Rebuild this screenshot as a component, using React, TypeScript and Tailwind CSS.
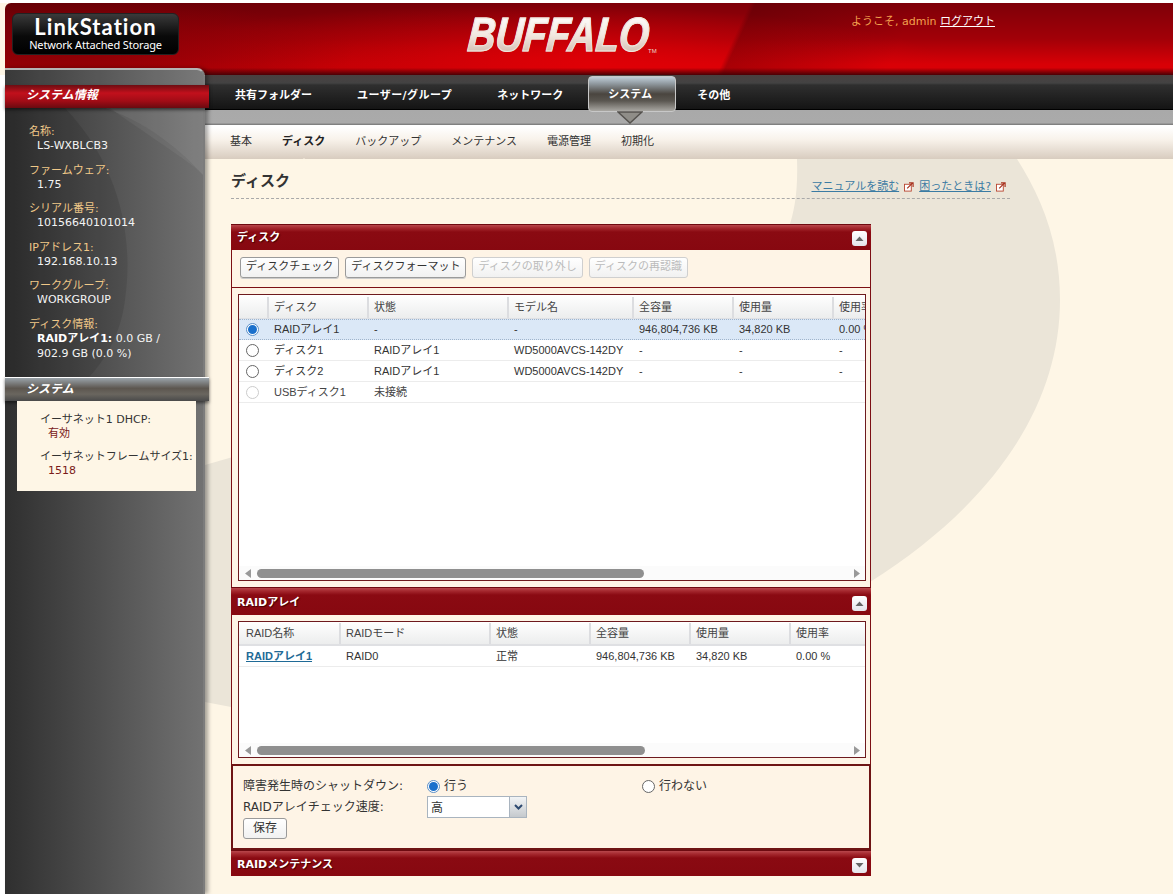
import React from "react";

const sansCls = "[font-family:'Liberation_Sans','Noto_Sans_CJK_JP',sans-serif]";
const verdCls = "[font-family:'DejaVu_Sans','Noto_Sans_CJK_JP',sans-serif]";

function ExtIcon() {
  return (
    <svg width="10" height="10" viewBox="0 0 11 11" fill="none" className="shrink-0">
      <rect x="0.5" y="2.5" width="7.5" height="7.5" fill="#fff" stroke="#b8452f" />
      <path d="M3.5 7 L9 1.5 M5.5 1 H10 V5.5" stroke="#a8321f" strokeWidth="1.3" />
    </svg>
  );
}

function Toggle({ up }: { up: boolean }) {
  return (
    <span className="w-[15px] h-[15px] rounded-[3px] bg-[linear-gradient(#ffffff,#e4e4ea)] flex items-center justify-center">
      <svg width="9" height="6" viewBox="0 0 9 6">
        <path d={up ? "M4.5 0.5 L8.5 5 H0.5 Z" : "M0.5 1 H8.5 L4.5 5.5 Z"} fill="#666" />
      </svg>
    </span>
  );
}

function PanelHeader({ title, up = true, h }: { title: string; up?: boolean; h: string }) {
  return (
    <div
      className={`${h} flex items-center justify-between pl-[6px] pr-[4px] border-t border-[#6e0a10] bg-[linear-gradient(#b8474c_0px,#a5282e_3px,#8a0a12_7px,#870810_100%)]`}
    >
      <span className={`${verdCls} text-white font-bold text-[11px] [text-shadow:1px_1px_1px_#400]`}>{title}</span>
      <Toggle up={up} />
    </div>
  );
}

function Btn({ children, disabled = false }: { children: React.ReactNode; disabled?: boolean }) {
  return (
    <span
      className={`h-[21px] px-[5px] flex items-center rounded-[3px] border text-[11px] bg-[linear-gradient(#ffffff,#f1f1f1)] ${
        disabled ? "border-[#cfcfcf] text-[#bbbbbb]" : "border-[#9a9a9a] text-[#333333] shadow-[0_1px_0_#ccc]"
      }`}
    >
      {children}
    </span>
  );
}

function Radio({ state }: { state: "on" | "off" | "disabled" }) {
  if (state === "on") {
    return (
      <span className="w-[13px] h-[13px] rounded-full border border-[#5b8fc7] bg-white flex items-center justify-center shrink-0">
        <span className="w-[9px] h-[9px] rounded-full bg-[#1a70cc]" />
      </span>
    );
  }
  return (
    <span
      className={`w-[13px] h-[13px] rounded-full border bg-white shrink-0 ${
        state === "off" ? "border-[#666666]" : "border-[#cccccc] bg-[#f4f4f4]"
      }`}
    />
  );
}

function Scroll({ thumb }: { thumb: string }) {
  return (
    <div className="h-[14px] flex items-center bg-[#fbfbfb] relative">
      <svg width="6" height="9" viewBox="0 0 6 9" className="ml-[6px]">
        <path d="M6 0 V9 L0 4.5 Z" fill="#999" />
      </svg>
      <div className={`${thumb} ml-[6px] h-[9px] rounded-full bg-[#8f8f8f]`} />
      <svg width="6" height="9" viewBox="0 0 6 9" className="ml-auto mr-[5px]">
        <path d="M0 0 V9 L6 4.5 Z" fill="#999" />
      </svg>
    </div>
  );
}

function HeadCell({ w, first = false, children }: { w: string; first?: boolean; children?: React.ReactNode }) {
  return (
    <div
      className={`${w} shrink-0 h-full flex items-center text-[#444444] whitespace-nowrap ${
        first ? "pl-[7px]" : "pl-[5px] border-l-2 border-[#dcdde0]"
      }`}
    >
      {children}
    </div>
  );
}

function Cell({ w, children, link = false }: { w: string; children?: React.ReactNode; link?: boolean }) {
  return (
    <div
      className={`${w} shrink-0 pl-[7px] whitespace-nowrap ${
        link ? "font-bold underline text-[#1f6a96]" : ""
      }`}
    >
      {children}
    </div>
  );
}

const sideItems: [string, React.ReactNode][] = [
  ["名称:", "LS-WXBLCB3"],
  ["ファームウェア:", "1.75"],
  ["シリアル番号:", "10156640101014"],
  ["IPアドレス1:", "192.168.10.13"],
  ["ワークグループ:", "WORKGROUP"],
];

function Sidebar() {
  return (
    <aside className="relative z-20 w-[200px] shrink-0 -mt-[7px] h-[826px] rounded-tr-[8px] border-t-2 border-r-2 border-[#b4b4b4] border-r-[#7c7c7c] bg-[linear-gradient(to_right,#2f2f2f,#727272)] shadow-[3px_0_4px_rgba(0,0,0,0.35)]">
      <svg className="absolute inset-0 pointer-events-none" width="198" height="500" viewBox="0 0 198 500">
        <path d="M0 38 H100 C150 55 185 90 198 105 V0 H0 Z" fill="#fff" opacity="0.05" />
        <path d="M105 38 C150 70 190 95 198 105 V40 Z" fill="#fff" opacity="0.05" />
        <path d="M0 320 V38 H60 C110 90 130 160 120 230 C115 270 95 300 70 320 Z" fill="#000" opacity="0.1" />
      </svg>
      <div className="relative w-[204px] h-[23px] mt-[15px] flex items-center pl-[21px] pb-[3px] bg-[linear-gradient(#6e0d12,#c2101c_35%,#a10c16_70%,#6a0a10)] shadow-[0_2px_3px_rgba(0,0,0,0.5)]">
        <span className={`${verdCls} italic font-bold text-[12px] text-white`}>システム情報</span>
      </div>
      <div className={`${verdCls} relative pt-[17px] pl-[24px] text-[11px] leading-[14px]`}>
        {sideItems.map(([label, value]) => (
          <div key={label} className="mb-[10.5px]">
            <div className="text-[#f0c888]">{label}</div>
            <div className="pl-[8px] text-[#f4f4f4]">{value}</div>
          </div>
        ))}
        <div className="text-[#f0c888]">ディスク情報:</div>
        <div className="pl-[8px] -mt-[1px] text-[#f4f4f4] leading-[15px]">
          <b className="text-white">RAIDアレイ1:</b> 0.0 GB /
          <br />
          902.9 GB (0.0 %)
        </div>
      </div>
      <div className="relative mt-[16px] w-[204px] h-[24px] flex items-center pl-[21px] border-t border-white bg-[linear-gradient(#9aa3aa,#5c564f_45%,#6a665f_70%,#4a4a4a)] shadow-[0_2px_3px_rgba(0,0,0,0.5)]">
        <span className={`${verdCls} italic font-bold text-[12px] text-white`}>システム</span>
      </div>
      <div className={`${verdCls} relative ml-[12px] w-[179px] h-[90px] bg-[#fef6e6] pt-[12px] pl-[23px] text-[11px] leading-[14px] text-[#333333] whitespace-nowrap`}>
        <div>イーサネット1 DHCP:</div>
        <div className="pl-[8px] text-[#7a1a1a]">有効</div>
        <div className="mt-[9.5px]">イーサネットフレームサイズ1:</div>
        <div className="pl-[8px] text-[#7a1a1a]">1518</div>
      </div>
    </aside>
  );
}

function Nav() {
  return (
    <>
      <div className={`${verdCls} h-[35px] flex items-center pl-[30px] gap-[45px] pt-[8px] border-b border-black bg-[linear-gradient(#4a4040_0px,#434343_8px,#2f2f2f_10px,#141414_100%)] text-white font-bold text-[11px]`}>
        <span>共有フォルダー</span>
        <span className="tracking-[0.45px]">ユーザー/グループ</span>
        <span>ネットワーク</span>
        <span className="relative -mx-[20px] w-[88px] h-[36px] self-start -mt-[7px] pt-[3px] pr-[4px] flex items-center justify-center rounded-[4px] border border-[#c8c8c8] bg-[linear-gradient(#c0ced9,#8f989e_20%,#4a453f_50%,#5a5650_70%,#a9a7a2)] z-10">
          システム
          <svg className="absolute top-[34px] left-[28px]" width="26" height="14" viewBox="0 0 26 14">
            <path d="M1 1 L13 12 L25 1 Z" fill="#8f8d88" stroke="#55524e" strokeWidth="1.5" />
          </svg>
        </span>
        <span className="-ml-[4px]">その他</span>
      </div>
      <div className="h-[15px] bg-[linear-gradient(#a9a9a9,#aaaaaa_85%,#747474)]" />
      <div className="h-[2px] bg-white" />
      <div className={`${verdCls} h-[32px] flex items-center pl-[25px] pb-[2px] gap-[30px] text-[11px] text-[#333333] bg-[linear-gradient(#ffffff,#f8f2ea_40%,#d8ccbf)]`}>
        <span>基本</span>
        <span className="relative font-bold text-[#222222]">
          ディスク
          <svg className="absolute top-[24px] left-[14px]" width="16" height="9" viewBox="0 0 16 9">
            <path d="M8 0 L16 9 H0 Z" fill="#fef6e6" />
          </svg>
        </span>
        <span>バックアップ</span>
        <span>メンテナンス</span>
        <span>電源管理</span>
        <span>初期化</span>
      </div>
    </>
  );
}

function DiskTable() {
  const widths = ["w-[28px]", "w-[100px]", "w-[140px]", "w-[125px]", "w-[100px]", "w-[100px]", "w-[100px]"];
  const rows: [("on" | "off" | "disabled"), string[]][] = [
    ["on", ["RAIDアレイ1", "-", "-", "946,804,736 KB", "34,820 KB", "0.00 %"]],
    ["off", ["ディスク1", "RAIDアレイ1", "WD5000AVCS-142DY", "-", "-", "-"]],
    ["off", ["ディスク2", "RAIDアレイ1", "WD5000AVCS-142DY", "-", "-", "-"]],
    ["disabled", ["USBディスク1", "未接続", "", "", "", ""]],
  ];
  const heads = ["ディスク", "状態", "モデル名", "全容量", "使用量", "使用率"];
  return (
    <div className={`${sansCls} ml-[6px] w-[628px] h-[287px] border border-[#6e1a1e] bg-white flex flex-col overflow-hidden text-[11px] text-[#333333]`}>
      <div className="h-[24px] shrink-0 flex pt-[2px] bg-[linear-gradient(#ffffff,#eceded)] border-b border-[#dfe0e3]">
        <HeadCell w={widths[0]} first />
        {heads.map((h, i) => (
          <HeadCell key={h} w={widths[i + 1]}>{h}</HeadCell>
        ))}
      </div>
      <div className="flex-1">
        {rows.map(([state, cells], r) => (
          <div
            key={r}
            className={`h-[21px] flex items-center ${
              r === 0 ? "bg-[#dbe8f7] border-y border-dotted border-[#9fb4cc]" : "border-b border-[#ececec]"
            } ${r === 3 ? "text-[#444444]" : ""}`}
          >
            <div className="w-[28px] shrink-0 flex justify-center -ml-[1px] mr-[1px]">
              <Radio state={state} />
            </div>
            {cells.map((c, i) => (
              <Cell key={i} w={widths[i + 1]}>{c}</Cell>
            ))}
          </div>
        ))}
      </div>
      <Scroll thumb="w-[387px]" />
    </div>
  );
}

function RaidTable() {
  const widths = ["w-[100px]", "w-[150px]", "w-[100px]", "w-[100px]", "w-[100px]", "w-[80px]"];
  const heads = ["RAID名称", "RAIDモード", "状態", "全容量", "使用量", "使用率"];
  const cells = ["RAIDアレイ1", "RAID0", "正常", "946,804,736 KB", "34,820 KB", "0.00 %"];
  return (
    <div className={`${sansCls} ml-[6px] w-[628px] h-[137px] border border-[#6e1a1e] bg-white flex flex-col overflow-hidden text-[11px] text-[#333333]`}>
      <div className="h-[24px] shrink-0 flex pt-[1px] bg-[linear-gradient(#ffffff,#eceded)] border-b-2 border-[#dfe0e3]">
        {heads.map((h, i) => (
          <HeadCell key={h} w={widths[i]} first={i === 0}>{h}</HeadCell>
        ))}
      </div>
      <div className="flex-1">
        <div className="h-[21px] flex items-center border-b border-[#ececec]">
          {cells.map((c, i) => (
            <Cell key={i} w={widths[i]} link={i === 0}>{c}</Cell>
          ))}
        </div>
      </div>
      <Scroll thumb="w-[388px]" />
    </div>
  );
}

function Form() {
  return (
    <div className={`${verdCls} h-[86px] border-x-2 border-y-2 border-[#6e1414] bg-[#fef4e6] pl-[10px] pt-[10px] text-[12px] text-[#333333] grid grid-cols-[184px_215px_1fr] grid-rows-[20px_22px_20px] items-center`}>
      <span>障害発生時のシャットダウン:</span>
      <span className="flex items-center gap-[4px]">
        <Radio state="on" /> 行う
      </span>
      <span className="flex items-center gap-[4px]">
        <Radio state="off" /> 行わない
      </span>
      <span>RAIDアレイチェック速度:</span>
      <span className="w-[100px] h-[22px] flex items-center justify-between border border-[#a9b4bf] bg-white pl-[3px]">
        <span className="pt-[2px]">高</span>
        <span className="w-[17px] h-full flex items-center justify-center bg-[linear-gradient(#f2f4f6,#c5c9cd)] border-l border-[#a9b4bf]">
          <svg width="9" height="6" viewBox="0 0 9 6">
            <path d="M1 1 L4.5 4.5 L8 1" fill="none" stroke="#2e4a70" strokeWidth="2" />
          </svg>
        </span>
      </span>
      <span />
      <span className="col-span-3">
        <span className="inline-flex h-[21px] w-[44px] items-center justify-center rounded-[3px] border border-[#9a9a9a] bg-[linear-gradient(#ffffff,#f1f1f1)]">保存</span>
      </span>
    </div>
  );
}

export default function App() {
  return (
    <div className="relative w-[1173px] h-[894px] overflow-hidden bg-[#fef6e6]">
      <svg className="absolute inset-0 pointer-events-none" width="1173" height="894" viewBox="0 0 1173 894">
        <path
          d="M797 159 C798 190 795 210 788 230 L500 380 L205 465 L231 470 L205 465 V702 L231 707 C500 720 740 670 870 582 C1000 500 1060 400 1060 300 C1060 240 1040 195 1017 159 Z"
          fill="#ebe5d8"
        />
      </svg>
      <div className="relative h-[3px] bg-white" />
      <header className="relative ml-[5px] h-[72px] rounded-tl-[6px] flex items-start bg-[linear-gradient(to_bottom,transparent_90%,#4a0005_100%),linear-gradient(to_right,rgba(40,0,0,0.3),transparent_50%),linear-gradient(115deg,transparent_62%,rgba(70,0,5,0.35)_62.5%,transparent_76%),radial-gradient(ellipse_260px_50px_at_90px_48px,#b00008,transparent),radial-gradient(ellipse_420px_60px_at_520px_62px,#e00006,transparent),linear-gradient(#7e0008,#a20008_50%,#d80006_85%)]">
        <div className="relative ml-[7px] mt-[10px] w-[167px] h-[42px] rounded-[6px] bg-[linear-gradient(#3a3a3a,#0a0a0a_55%,#000000)] border border-[#222] flex flex-col items-center justify-center text-white">
          <span className="[font-family:'Lato',sans-serif] font-bold text-[22px] leading-[18px] mb-[2px] tracking-[1.05px]">LinkStation</span>
          <span className="[font-family:'Noto_Sans',sans-serif] text-[11px] leading-[13px] tracking-[-0.15px]">Network Attached Storage</span>
        </div>
        <div className="relative ml-[289px] mt-[10px] w-[186px] h-[44px] flex items-start">
          <span className="[font-family:'Liberation_Sans',sans-serif] origin-left scale-x-[0.8] -skew-x-6 italic font-bold text-[48px] leading-[44px] [-webkit-text-stroke:1px_#efe4dc] bg-[linear-gradient(#ffffff,#f2e8e0_50%,#cdb5a8)] bg-clip-text text-transparent">BUFFALO</span>
          <span className="absolute left-[180px] top-[34px] text-[6px] text-[#ead6cc] [font-family:'Liberation_Sans',sans-serif]">TM</span>
        </div>
        <div className={`${verdCls} ml-[197px] mt-[11px] text-[11px] whitespace-nowrap text-[#f3a24f]`}>
          ようこそ, admin <span className="underline text-white">ログアウト</span>
        </div>
      </header>
      <div className="relative flex">
        <div className="w-[5px] shrink-0 bg-white" />
        <Sidebar />
        <main className="relative flex-1 min-w-0">
          <Nav />
          <div className="ml-[26px] w-[779px] h-[40px] flex justify-between border-b border-dashed border-[#a9a9a9]">
            <h1 className={`${verdCls} font-bold text-[15px] text-[#333333] mt-[11px] leading-[22px]`}>ディスク</h1>
            <div className={`${verdCls} flex items-center gap-[5px] mt-[17px] mr-[4px] text-[11px] text-[#3b7ba3]`}>
              <span className="underline">マニュアルを読む</span>
              <ExtIcon />
              <span className="underline">困ったときは?</span>
              <ExtIcon />
            </div>
          </div>
          <section className={`${verdCls} ml-[26px] mt-[25px] w-[640px]`}>
            <PanelHeader title="ディスク" h="h-[26px] pt-[2px]" />
            <div className="border-x border-[#7c0f14] bg-[#fef4e6]">
              <div className="h-[38px] flex items-center pl-[8px] gap-[6px] border-b border-[#7c0f14] pb-[2px]">
                <Btn>ディスクチェック</Btn>
                <Btn>ディスクフォーマット</Btn>
                <Btn disabled>ディスクの取り外し</Btn>
                <Btn disabled>ディスクの再認識</Btn>
              </div>
              <div className="py-[6px]">
                <DiskTable />
              </div>
            </div>
            <PanelHeader title="RAIDアレイ" h="h-[28px] pt-[4px]" />
            <div className="border-x border-[#7c0f14] bg-[#fef4e6] py-[6px]">
              <RaidTable />
            </div>
            <Form />
            <PanelHeader title="RAIDメンテナンス" up={false} h="h-[26px] pt-[3px]" />
          </section>
        </main>
      </div>
    </div>
  );
}
